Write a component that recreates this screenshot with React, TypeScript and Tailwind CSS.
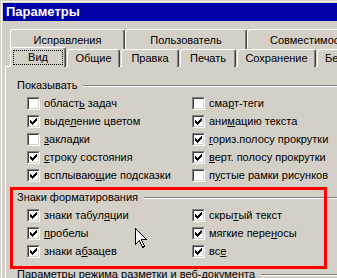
import React from "react";

function Check({ checked }: { checked: boolean }) {
  return (
    <div className="relative w-[13px] h-[13px] shrink-0 border border-t-[#808080] border-l-[#808080] border-r-white border-b-white">
      <div className="w-[11px] h-[11px] border border-t-[#404040] border-l-[#404040] border-r-[#d4d0c8] border-b-[#d4d0c8] bg-white">
        {checked && (
          <svg width="9" height="9" viewBox="0 0 9 9" shapeRendering="crispEdges" className="block">
            <rect x="7" y="1" width="1" height="1" fill="#000" />
            <rect x="6" y="2" width="2" height="1" fill="#000" />
            <rect x="1" y="3" width="1" height="1" fill="#000" />
            <rect x="5" y="3" width="3" height="1" fill="#000" />
            <rect x="1" y="4" width="2" height="1" fill="#000" />
            <rect x="4" y="4" width="3" height="1" fill="#000" />
            <rect x="1" y="5" width="5" height="1" fill="#000" />
            <rect x="2" y="6" width="3" height="1" fill="#000" />
            <rect x="3" y="7" width="1" height="1" fill="#000" />
          </svg>
        )}
      </div>
    </div>
  );
}

function Row({ checked, children }: { checked: boolean; children: React.ReactNode }) {
  return (
    <div className="flex items-center h-[18px] gap-[4px] whitespace-nowrap">
      <Check checked={checked} />
      <span className="leading-none">{children}</span>
    </div>
  );
}

function Tab({ className, children }: { className: string; children: React.ReactNode }) {
  return (
    <div
      className={
        "flex items-center justify-center shrink-0 bg-[#d4d0c8] border-l border-t border-l-white border-t-white border-r border-r-[#404040] rounded-t-[3px] shadow-[inset_-1px_0_0_#808080] whitespace-nowrap overflow-hidden " +
        className
      }
    >
      {children}
    </div>
  );
}

function GroupHeader({ children, className }: { children: React.ReactNode; className: string }) {
  return (
    <div className={"flex items-center h-[16px] whitespace-nowrap " + className}>
      <span className="leading-none pl-[11px] pr-[6px]">{children}</span>
      <div className="flex-1 h-[2px] border-t border-t-[#808080] border-b border-b-white mt-[2px]" />
    </div>
  );
}

export default function App() {
  return (
    <div className="relative w-[337px] h-[278px] overflow-hidden bg-[#d4d0c8] text-black text-[11px] font-['Liberation_Sans',Arial,sans-serif]">
      <div className="border-t border-l border-[#d4d0c8] h-full">
        <div className="border-t border-l border-white h-full">
          <div className="pt-px pl-px h-full">
            <div className="h-[18px] bg-[#0000a8] flex items-center pl-[3px] text-white font-bold text-[13px]">
              Параметры
            </div>
            <div className="ml-[2px] mt-[8px]">
              <div className="flex h-[20px] pl-[5px]">
                <Tab className="w-[115px] h-[22px]">Исправления</Tab>
                <Tab className="w-[122px] h-[22px]">Пользователь</Tab>
                <Tab className="w-[126px] h-[22px]">Совместимость</Tab>
              </div>
              <div className="flex items-start h-[19px] -mt-[2px] pl-[5px]">
                <Tab className="relative z-10 w-[56px] h-[20px]">
                  <div className="flex items-center justify-center w-[50px] h-[15px] border border-dotted border-black">
                    Вид
                  </div>
                </Tab>
                <Tab className="ml-[1px] mt-[2px] w-[53px] h-[18px]">Общие</Tab>
                <Tab className="ml-[1px] mt-[2px] w-[58px] h-[18px]">Правка</Tab>
                <Tab className="ml-[1px] mt-[2px] w-[56px] h-[18px]">Печать</Tab>
                <Tab className="ml-[1px] mt-[2px] w-[79px] h-[18px]">Сохранение</Tab>
                <Tab className="ml-[1px] mt-[2px] w-[100px] h-[18px] justify-start pl-[7px]">Безопасность</Tab>
              </div>
              <div className="border-t border-l border-white h-[240px] pt-[10px]">
                <GroupHeader className="">Показывать</GroupHeader>
                <div className="grid grid-cols-[165px_1fr] pl-[21px] mt-px">
                  <div>
                    <Row checked={false}>област<u>ь</u> задач</Row>
                    <Row checked>выде<u>л</u>ение цветом</Row>
                    <Row checked={false}><u>з</u>акладки</Row>
                    <Row checked><u>с</u>троку состояния</Row>
                    <Row checked>всплываю<u>щ</u>ие подсказки</Row>
                  </div>
                  <div>
                    <Row checked={false}>сма<u>р</u>т-теги</Row>
                    <Row checked>ани<u>м</u>ацию текста</Row>
                    <Row checked><u>г</u>ориз.полосу прокрутки</Row>
                    <Row checked><u>в</u>ерт. полосу прокрутки</Row>
                    <Row checked={false}>п<u>у</u>стые рамки рисунков</Row>
                  </div>
                </div>
                <GroupHeader className="mt-[5px]">Знаки форматирования</GroupHeader>
                <div className="grid grid-cols-[165px_1fr] pl-[21px] mt-px">
                  <div>
                    <Row checked>знаки табул<u>я</u>ции</Row>
                    <Row checked><u>п</u>робелы</Row>
                    <Row checked>знаки а<u>б</u>зацев</Row>
                  </div>
                  <div>
                    <Row checked>скры<u>т</u>ый текст</Row>
                    <Row checked>мягкие пере<u>н</u>осы</Row>
                    <Row checked>вс<u>е</u></Row>
                  </div>
                </div>
                <GroupHeader className="mt-[6px]">Параметры режима разметки и веб-документа</GroupHeader>
              </div>
            </div>
          </div>
        </div>
      </div>
      <div className="absolute left-[10px] top-[187px] w-[317px] h-[82px] border-[3px] border-[#ff0000]" />
      <svg className="absolute left-[135px] top-[228px]" width="13" height="21" viewBox="0 0 13 21" shapeRendering="crispEdges">
        <path d="M0.5 0.5 L0.5 16.5 L4.5 12.5 L7.5 19.5 L9.5 18.5 L6.5 11.5 L11.5 11.5 Z" fill="#fff" stroke="#000" strokeWidth="1" />
      </svg>
    </div>
  );
}
